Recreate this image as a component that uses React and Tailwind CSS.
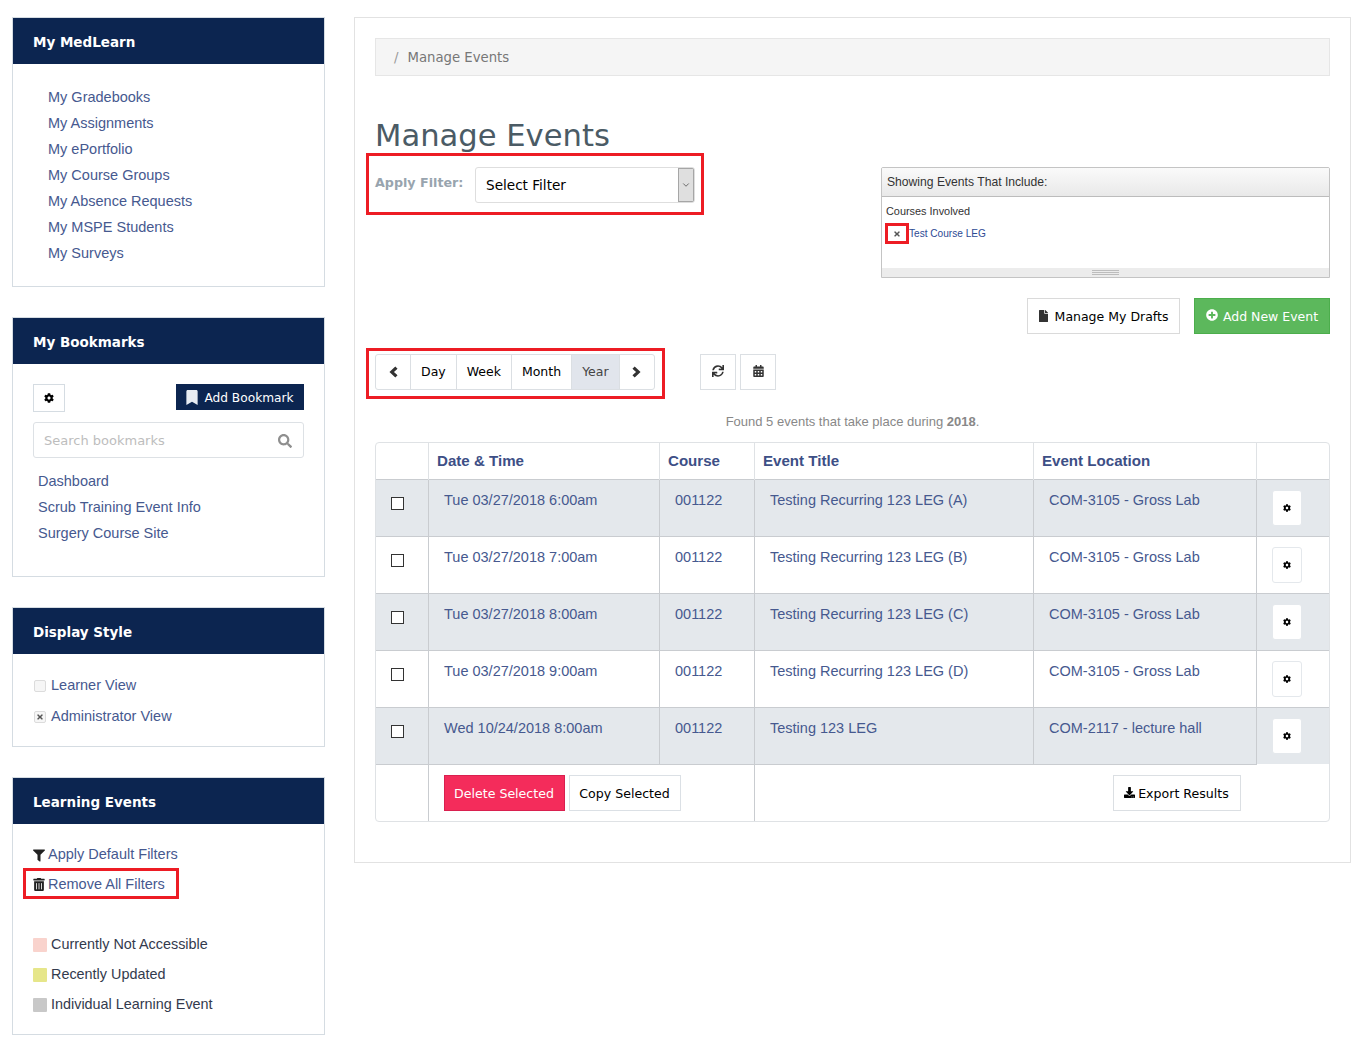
import { FaCog, FaBookmark, FaSearch, FaFilter, FaTrashAlt, FaSync, FaCalendarAlt, FaFile, FaPlusCircle, FaDownload, FaTimes } from 'react-icons/fa';
import { ChevronDown } from 'lucide-react';

const dejavu = 'font-["DejaVu_Sans",sans-serif]';

const myLinks = ['My Gradebooks', 'My Assignments', 'My ePortfolio', 'My Course Groups', 'My Absence Requests', 'My MSPE Students', 'My Surveys'];
const bookmarks = ['Dashboard', 'Scrub Training Event Info', 'Surgery Course Site'];

const events = [
  { date: 'Tue 03/27/2018 6:00am', title: 'Testing Recurring 123 LEG (A)', location: 'COM-3105 - Gross Lab' },
  { date: 'Tue 03/27/2018 7:00am', title: 'Testing Recurring 123 LEG (B)', location: 'COM-3105 - Gross Lab' },
  { date: 'Tue 03/27/2018 8:00am', title: 'Testing Recurring 123 LEG (C)', location: 'COM-3105 - Gross Lab' },
  { date: 'Tue 03/27/2018 9:00am', title: 'Testing Recurring 123 LEG (D)', location: 'COM-3105 - Gross Lab' },
  { date: 'Wed 10/24/2018 8:00am', title: 'Testing 123 LEG', location: 'COM-2117 - lecture hall' },
];

const Panel = ({ title, height, children }) => (
  <section className={`${height} border border-[#d5dce2] bg-white`}>
    <h2 className={`h-[46px] bg-[#0c2550] pl-5 text-[13.5px] leading-[48px] font-bold text-white ${dejavu}`}>{title}</h2>
    {children}
  </section>
);

const FakeCheck = ({ checked }) => (
  <span className="flex h-3 w-3 items-center justify-center rounded-[2px] border border-[#dcdcdc] bg-[#f6f6f6] text-[#555]">
    {checked && <FaTimes className="h-2 w-2" />}
  </span>
);

const Swatch = ({ color, label }) => (
  <div className="flex h-[30px] items-center text-[14.4px] text-[#333a4d]">
    <span className={`mr-1 h-[14px] w-[14px] rounded-[1px] ${color}`} />
    {label}
  </div>
);

// bold FA4 style chevrons, the package ones come out too thin at this size
const Chevron = ({ right }) => (
  <svg viewBox="0 0 10 13" className="h-[12px] w-[9px] fill-[#333]">
    <path d={right ? 'M3 0.5L0.5 3L4.5 6.5L0.5 10L3 12.5L9.5 6.5Z' : 'M7 0.5L9.5 3L5.5 6.5L9.5 10L7 12.5L0.5 6.5Z'} />
  </svg>
);

const Sidebar = () => (
  <aside className="flex w-[313px] shrink-0 flex-col gap-[30px] text-[14.5px] text-[#46598f]">
    <Panel title="My MedLearn" height="h-[270px]">
      <ul className="pt-[20px] pl-[35px] text-[14.5px]">
        {myLinks.map((l) => <li key={l} className="h-[26px] leading-[26px]">{l}</li>)}
      </ul>
    </Panel>

    <Panel title="My Bookmarks" height="h-[260px]">
      <div className="px-5 pt-5">
        <div className="flex items-start justify-between">
          <button className="flex h-[28px] w-8 items-center justify-center border border-[#d5dce2] bg-white text-black">
            <FaCog className="h-[10px] w-[10px]" />
          </button>
          <button className={`flex h-[26px] w-[128px] items-center justify-center gap-[6px] bg-[#0c2550] pt-[2px] text-[12.2px] text-white ${dejavu}`}>
            <FaBookmark className="-mt-[2px] h-[15px] w-[12px] text-[#e8ecf2]" />
            Add Bookmark
          </button>
        </div>
        <div className={`mt-[10px] flex h-9 items-center justify-between rounded-[3px] border border-[#dde1e5] pt-px pr-[11px] pl-[10px] text-[13px] text-[#bdbdbd] ${dejavu}`}>
          Search bookmarks
          <FaSearch className="h-[14px] w-[14px] text-[#8f8f8f]" />
        </div>
        <ul className="mt-[10px] pl-[5px]">
          {bookmarks.map((b) => <li key={b} className="h-[26px] leading-[26px]">{b}</li>)}
        </ul>
      </div>
    </Panel>

    <Panel title="Display Style" height="h-[140px]">
      <div className="pt-[16px] pl-[21px]">
        <div className="flex h-[31px] items-center gap-[5px]"><FakeCheck /> Learner View</div>
        <div className="flex h-[31px] items-center gap-[5px]"><FakeCheck checked /> Administrator View</div>
      </div>
    </Panel>

    <Panel title="Learning Events" height="h-[258px]">
      <div className="pt-[16px] pl-5">
        <div className="flex h-[28px] items-center gap-[3px] pt-[2px]">
          <FaFilter className="h-[13px] w-[12px] text-[#222]" /> Apply Default Filters
        </div>
        <div className="-ml-[10px] flex h-[31px] w-[156px] items-center gap-[3px] border-[3px] border-[#ed1c24] pt-[2px] pl-[7px]">
          <FaTrashAlt className="h-[13px] w-[12px] text-[#222]" /> Remove All Filters
        </div>
        <div className="mt-[31px]">
          <Swatch color="bg-[#f9d3cd]" label="Currently Not Accessible" />
          <Swatch color="bg-[#e6e68a]" label="Recently Updated" />
          <Swatch color="bg-[#c8c8c8]" label="Individual Learning Event" />
        </div>
      </div>
    </Panel>
  </aside>
);

const FilterSummary = () => (
  <div className="h-[111px] w-[449px] overflow-hidden rounded-t-[2px] border border-[#c4c4c4] bg-white">
    <div className="flex h-[29px] items-center border-b border-[#bcbcbc] bg-gradient-to-b from-[#fafafa] to-[#e9e9e9] pl-[5px] text-[12.15px] text-[#333]">
      Showing Events That Include:
    </div>
    <div className="h-[71px] pt-[8px] pl-[3px]">
      <div className="pl-px text-[10.9px] leading-[13px] text-[#333]">Courses Involved</div>
      <div className="mt-[5px] flex items-center text-[10.1px] text-[#2d4a94]">
        <span className="flex h-[21px] w-[24px] items-center justify-center border-[3px] border-[#ed1c24] text-[#555]">
          <FaTimes className="h-2 w-2" />
        </span>
        Test Course LEG
      </div>
    </div>
    <div className="flex h-[9px] flex-col items-center justify-center gap-[1px] bg-[#ececec]">
      <span className="h-px w-[27px] bg-[#bdbdbd]" />
      <span className="h-px w-[27px] bg-[#bdbdbd]" />
      <span className="h-px w-[27px] bg-[#bdbdbd]" />
    </div>
  </div>
);

const viewTabs = ['Day', 'Week', 'Month', 'Year'];

const ViewToolbar = () => (
  <div className="-ml-[9px] flex h-[51px] w-[299px] items-start border-[3px] border-[#ed1c24] pt-[3px] pl-[6px]">
    <div className={`flex h-9 overflow-hidden rounded-[3px] border border-[#dbdfe3] text-[12.5px] text-black ${dejavu}`}>
      <span className="flex w-[35px] items-center justify-center border-r border-[#dbdfe3]"><Chevron /></span>
      {viewTabs.map((t) => (
        <span key={t} className={t === 'Year' ? 'flex items-center bg-[#e1e5ec] px-[10px] pt-px text-[#444]' : 'flex items-center border-r border-[#dbdfe3] px-[10px] pt-px'}>{t}</span>
      ))}
      <span className="flex w-[35px] items-center justify-center border-l border-[#dbdfe3]"><Chevron right /></span>
    </div>
  </div>
);

const EventsTable = () => (
  <div className="overflow-hidden rounded-[4px] border border-[#dfe2e5]">
    <table className="w-full table-fixed border-collapse text-[14.5px] text-[#46598f]">
      <colgroup>
        <col className="w-[52px]" />
        <col className="w-[231px]" />
        <col className="w-[95px]" />
        <col className="w-[279px]" />
        <col className="w-[223px]" />
        <col />
      </colgroup>
      <thead>
        <tr className="h-[36px] text-left text-[15.1px] font-bold text-[#3d4f86]">
          <th className="border-r border-[#dfe2e5]" />
          <th className="border-r border-[#dfe2e5] pt-px pl-[8.5px]">Date &amp; Time</th>
          <th className="border-r border-[#dfe2e5] pt-px pl-[8.5px]">Course</th>
          <th className="border-r border-[#dfe2e5] pt-px pl-[8.5px]">Event Title</th>
          <th className="border-r border-[#dfe2e5] pt-px pl-[8.5px]">Event Location</th>
          <th />
        </tr>
      </thead>
      <tbody>
        {events.map((ev, i) => (
          <tr key={ev.date} className={`h-[57px] ${i % 2 === 0 ? 'bg-[#e4e8ec]' : 'bg-white'}`}>
            <td className="border border-l-0 border-[#c9ccd0] pt-[17px] align-top">
              <span className="ml-[15px] block h-[13px] w-[13px] border border-[#333] bg-white" />
            </td>
            <td className="border border-[#c9ccd0] pt-[10px] pl-[15.5px] align-top">{ev.date}</td>
            <td className="border border-[#c9ccd0] pt-[10px] pl-[15.5px] align-top">001122</td>
            <td className="border border-[#c9ccd0] pt-[10px] pl-[15.5px] align-top">{ev.title}</td>
            <td className="border border-[#c9ccd0] pt-[10px] pl-[15.5px] align-top">{ev.location}</td>
            <td className={`border-t border-[#c9ccd0] align-middle ${i === 4 ? 'border-b-0' : 'border-b'}`}>
              <span className="ml-[15px] flex h-9 w-[30px] items-center justify-center rounded-[3px] border border-[#e4e8ec] bg-white pt-px text-black">
                <FaCog className="h-[8px] w-[8px]" />
              </span>
            </td>
          </tr>
        ))}
        <tr className="h-[57px]">
          <td className="border-r border-[#c9ccd0]" />
          <td colSpan={2} className="border-r border-[#c9ccd0] pl-[15px]">
            <div className={`flex gap-1 text-[12.6px] ${dejavu}`}>
              <span className="flex h-9 w-[121px] items-center justify-center border border-[#d9204f] bg-[#f42c5b] pt-[3px] text-white">Delete Selected</span>
              <span className="flex h-9 w-[112px] items-center justify-center border border-[#dbe0e5] pt-[3px] text-black">Copy Selected</span>
            </div>
          </td>
          <td colSpan={3}>
            <span className={`ml-[358px] flex h-9 w-[128px] items-center justify-center gap-[3px] border border-[#dbdfe3] pt-[3px] text-[12.6px] text-black ${dejavu}`}>
              <FaDownload className="-mt-[3px] h-[11px] w-[11px]" /> Export Results
            </span>
          </td>
        </tr>
      </tbody>
    </table>
  </div>
);

const MainPanel = () => (
  <main className="h-[846px] w-[997px] shrink-0 border border-[#e2e2e2] bg-white px-5 pt-5">
    <div className={`flex h-[38px] items-center border border-[#e6e6e6] bg-[#f5f5f5] pt-px pl-[18px] text-[13.25px] text-[#777] ${dejavu}`}>
      <span className="mr-[9px] text-[#999]">/</span> Manage Events
    </div>
    <h1 className={`mt-[42px] h-[35px] text-[30.6px] leading-[36px] text-[#4b5b65] ${dejavu}`}>Manage Events</h1>

    <div className="flex items-start justify-between">
      <div className="-ml-[9px] flex h-[62px] w-[338px] items-start border-[3px] border-[#ed1c24] pt-[11px] pl-[6px]">
        <span className={`mt-[6px] w-[100px] shrink-0 text-[12.7px] font-bold text-[#98a4ae] ${dejavu}`}>Apply Filter:</span>
        <div className={`flex h-9 w-[220px] items-center justify-between overflow-hidden rounded-[3px] border border-[#dedede] pl-[10px] text-[13.6px] text-black ${dejavu}`}>
          <span className="pt-px">Select Filter</span>
          <span className="flex h-full w-[16px] items-center justify-center border border-[#a6a6a6] bg-[#dfdfdf] text-[#555]"><ChevronDown className="h-[10px] w-[10px]" /></span>
        </div>
      </div>
      <div className="mt-[14px]"><FilterSummary /></div>
    </div>

    <div className={`mt-[20px] flex justify-end gap-[14px] text-[12.5px] ${dejavu}`}>
      <span className="flex h-9 w-[153px] items-center justify-center gap-[7px] border border-[#dadada] pt-[2px] text-black">
        <FaFile className="-mt-[3px] h-[12px] w-[9px] text-[#333]" /> Manage My Drafts
      </span>
      <span className="flex h-9 w-[136px] items-center justify-center gap-[5px] border border-[#4cae4c] bg-[#5cb85c] pt-[2px] text-white">
        <FaPlusCircle className="-mt-[4px] h-[12px] w-[12px]" /> Add New Event
      </span>
    </div>

    <div className="mt-[14px] flex items-start gap-[35px]">
      <ViewToolbar />
      <div className="mt-[6px] flex gap-1 text-[#333]">
        <span className="flex h-9 w-9 items-center justify-center border border-[#dbdfe3] pb-[2px]"><FaSync className="h-[12px] w-[12px]" /></span>
        <span className="flex h-9 w-9 items-center justify-center border border-[#dbdfe3] pb-[2px]"><FaCalendarAlt className="h-[12px] w-[11px]" /></span>
      </div>
    </div>

    <p className="mt-[15px] mb-[12px] h-[16px] text-center text-[13px] leading-[16px] text-[#888]">
      Found 5 events that take place during <span className="font-bold">2018</span>.
    </p>

    <EventsTable />
  </main>
);

const App = () => (
  <div className={`flex h-[1045px] w-[1365px] items-start gap-[29px] overflow-hidden bg-white pt-[17px] pl-3 font-["Liberation_Sans",sans-serif]`}>
    <Sidebar />
    <MainPanel />
  </div>
);

export default App;
